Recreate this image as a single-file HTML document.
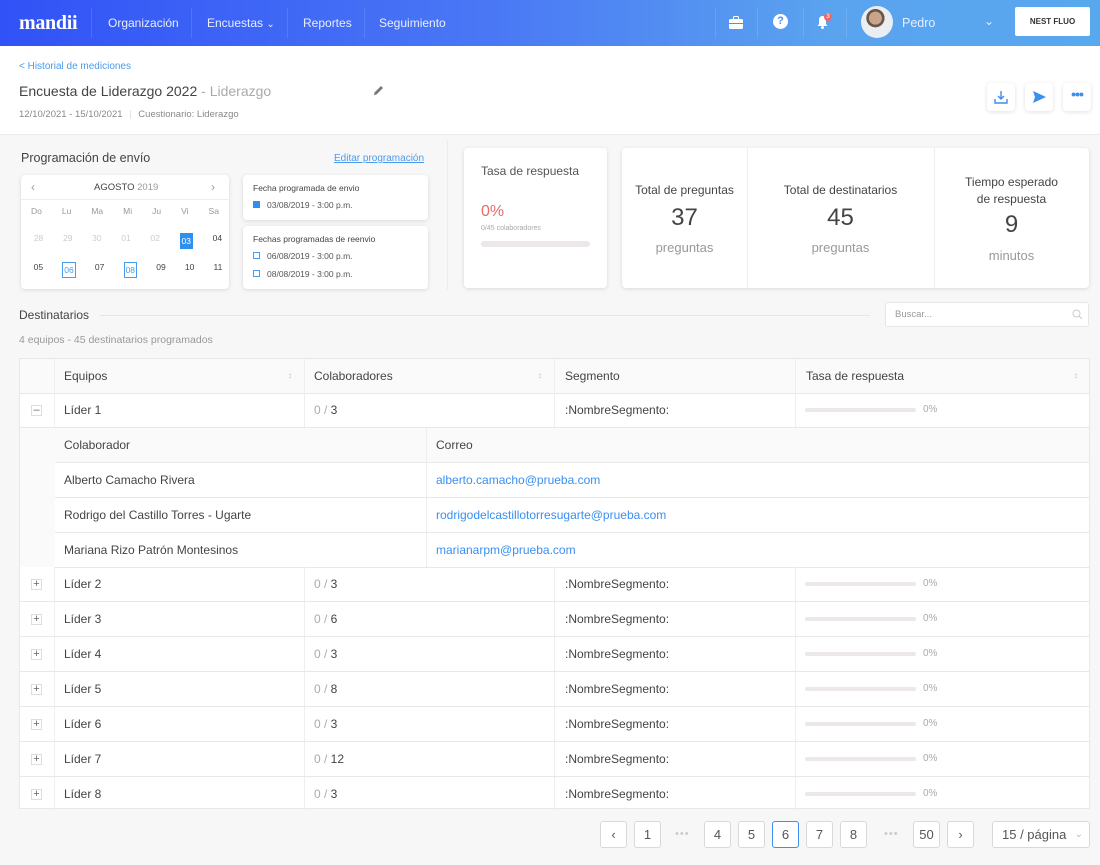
<!DOCTYPE html>
<html><head><meta charset="utf-8">
<style>
*{box-sizing:border-box;margin:0;padding:0}
body{width:1100px;height:865px;overflow:hidden;background:#f7f7f7;font-family:"Liberation Sans",sans-serif;color:#555;position:relative;font-size:12px}
.a{position:absolute}
.nav{left:0;top:0;width:1100px;height:46px;background:linear-gradient(90deg,#3152f6 0%,#4a78f5 45%,#5aa3ef 75%,#58a8ee 100%)}
.nav .t{color:#e8eeff;font-size:12px;top:16px}
.sep{width:1px;height:30px;top:8px;background:rgba(255,255,255,.12)}
.card{background:#fff;border-radius:4px;box-shadow:0 1px 4px rgba(0,0,0,.12)}
.tb{left:19px;width:1071px;background:#fff;border:1px solid #e8e8e8}
.row{position:absolute;left:0;width:1069px;height:35px;border-bottom:1px solid #e8e8e8}
.c{position:absolute;top:0;height:34px;line-height:34px;font-size:12px;color:#444}
.vl{position:absolute;top:0;width:1px;height:34px;background:#eee}
.pb{position:absolute;top:15px;left:10px;width:111px;height:4px;border-radius:2px;background:#ece8e8}
.pct{position:absolute;left:128px;top:0;font-size:10px;color:#aaa}
.bx{position:absolute;left:11px;top:12px;width:11px;height:11px;border:1px solid #ddd;font-size:11px;line-height:9px;text-align:center;color:#666;background:#fff}
.pg{position:absolute;top:821px;width:27px;height:27px;border:1px solid #d9d9d9;border-radius:3px;background:#fff;text-align:center;line-height:25px;font-size:13px;color:#555}
.dot{position:absolute;top:821px;color:#ccc;font-size:11px;line-height:27px;letter-spacing:1px}
</style></head><body>
<div class="a nav">
 <div class="a" style="left:19px;top:12px;color:#fff;font-family:'Liberation Serif',serif;font-weight:bold;font-size:20px;letter-spacing:-.3px">mandii</div>
 <div class="a sep" style="left:91px"></div>
 <div class="a t" style="left:108px">Organización</div>
 <div class="a sep" style="left:191px"></div>
 <div class="a t" style="left:207px">Encuestas <span style="font-size:10px">&#8964;</span></div>
 <div class="a sep" style="left:287px"></div>
 <div class="a t" style="left:303px">Reportes</div>
 <div class="a sep" style="left:364px"></div>
 <div class="a t" style="left:379px">Seguimiento</div>
 <div class="a sep" style="left:715px"></div>
 <svg class="a" style="left:729px;top:16px" width="14" height="13" viewBox="0 0 14 13"><rect x="0" y="3" width="14" height="10" rx="1.5" fill="#fff"/><rect x="4.5" y="0.5" width="5" height="3" rx="1" fill="none" stroke="#fff"/><rect x="0" y="7" width="14" height="1" fill="#5a8cf2"/></svg>
 <div class="a sep" style="left:757px"></div>
 <div class="a" style="left:773px;top:14px;width:15px;height:15px;border-radius:50%;background:#fff;color:#4f90f0;font-size:11px;font-weight:bold;text-align:center;line-height:15px">?</div>
 <div class="a sep" style="left:803px"></div>
 <svg class="a" style="left:816px;top:15px" width="13" height="15" viewBox="0 0 13 15"><path d="M6.5 1C4 1 3 3 3 5v4L1.5 11h10L10 9V5c0-2-1-4-3.5-4z" fill="#fff"/><circle cx="6.5" cy="12.5" r="1.5" fill="#fff"/></svg>
 <div class="a" style="left:824px;top:13px;width:8px;height:8px;border-radius:50%;background:#e86a6a;color:#fff;font-size:6px;text-align:center;line-height:8px">3</div>
 <div class="a sep" style="left:846px"></div>
 <div class="a" style="left:861px;top:6px;width:32px;height:32px;border-radius:50%;background:radial-gradient(circle at 45% 38%,#c9a48a 0 24%,#6b5648 25% 34%,#e9eef2 35%)"></div>
 <div class="a t" style="left:902px;top:16px;font-size:12.5px">Pedro</div>
 <div class="a" style="left:984px;top:14px;color:#e8eeff;font-size:12px">&#8964;</div>
 <div class="a" style="left:1015px;top:7px;width:75px;height:29px;background:#fff;border-radius:2px;text-align:center;line-height:29px;font-size:8px;font-weight:bold;color:#333">NEST FLUO</div>
</div>
<div class="a" style="left:0;top:46px;width:1100px;height:89px;background:#fff;border-bottom:1px solid #ececec"></div>
<div class="a" style="left:19px;top:61px;font-size:10px;color:#4a9bef">&lt; Historial de mediciones</div>
<div class="a" style="left:19px;top:83px;font-size:14px;color:#444">Encuesta de Liderazgo 2022 <span style="color:#aaa">- Liderazgo</span></div>
<svg class="a" style="left:373px;top:85px" width="11" height="11" viewBox="0 0 11 11"><path d="M1 10l.5-2.5L8 1l2 2-6.5 6.5z" fill="#777"/></svg>
<div class="a" style="left:19px;top:109px;font-size:9.5px;color:#888">12/10/2021 - 15/10/2021 <span style="color:#ddd;margin:0 4px">|</span> Cuestionario: Liderazgo</div>
<div class="a card" style="left:987px;top:83px;width:28px;height:28px"><svg style="margin:7px" width="14" height="14" viewBox="0 0 14 14"><path d="M7 1v8M4 6l3 3 3-3M1 9v4h12V9" fill="none" stroke="#3a8ff0" stroke-width="1.4"/></svg></div>
<div class="a card" style="left:1025px;top:83px;width:28px;height:28px"><svg style="margin:8px" width="13" height="12" viewBox="0 0 13 12"><path d="M0 0l13 6L0 12l2-6z" fill="#3a8ff0"/></svg></div>
<div class="a card" style="left:1063px;top:83px;width:28px;height:28px;color:#3a8ff0;font-size:14px;text-align:center;line-height:22px;font-weight:bold;letter-spacing:-1px">•••</div>

<div class="a" style="left:21px;top:151px;font-size:12.5px;color:#444">Programación de envío</div>
<div class="a" style="left:334px;top:153px;font-size:10px;color:#4a9bef;text-decoration:underline">Editar programación</div>
<div class="a card" style="left:21px;top:175px;width:208px;height:114px">
 <div class="a" style="left:0;top:0;width:208px;height:25px;border-bottom:1px solid #eee"></div>
 <div class="a" style="left:10px;top:5px;color:#999;font-size:12px">&#8249;</div>
 <div class="a" style="left:190px;top:5px;color:#999;font-size:12px">&#8250;</div>
 <div class="a" style="left:73px;top:7px;font-size:9.5px;color:#444">AGOSTO <span style="color:#999">2019</span></div>
 <div class="a" style="left:0;top:31px;width:208px;font-size:8.5px;color:#999;display:flex;justify-content:space-around"><span>Do</span><span>Lu</span><span>Ma</span><span>Mi</span><span>Ju</span><span>Vi</span><span>Sa</span></div>
 <div class="a" style="left:3px;top:58px;width:208px;font-size:8.5px;color:#ccc;display:flex;justify-content:space-around"><span>28</span><span>29</span><span>30</span><span>01</span><span>02</span><span style="background:#2e8ff0;color:#fff;padding:3px 2px">03</span><span style="color:#444">04</span></div>
 <div class="a" style="left:3px;top:87px;width:208px;font-size:8.5px;color:#444;display:flex;justify-content:space-around"><span>05</span><span style="border:1px solid #4a9bef;color:#4a9bef;padding:2px 1px">06</span><span>07</span><span style="border:1px solid #4a9bef;color:#4a9bef;padding:2px 1px">08</span><span>09</span><span>10</span><span>11</span></div>
</div>
<div class="a card" style="left:243px;top:175px;width:185px;height:45px">
 <div class="a" style="left:10px;top:8px;font-size:8.5px;color:#444">Fecha programada de envio</div>
 <div class="a" style="left:10px;top:26px;width:7px;height:7px;background:#2e8ff0"></div>
 <div class="a" style="left:24px;top:25px;font-size:8.5px;color:#555">03/08/2019 - 3:00 p.m.</div>
</div>
<div class="a card" style="left:243px;top:226px;width:185px;height:63px">
 <div class="a" style="left:10px;top:8px;font-size:8.5px;color:#444">Fechas programadas de reenvio</div>
 <div class="a" style="left:10px;top:26px;width:7px;height:7px;border:1px solid #4a9bef"></div>
 <div class="a" style="left:24px;top:25px;font-size:8.5px;color:#555">06/08/2019 - 3:00 p.m.</div>
 <div class="a" style="left:10px;top:44px;width:7px;height:7px;border:1px solid #4a9bef"></div>
 <div class="a" style="left:24px;top:43px;font-size:8.5px;color:#555">08/08/2019 - 3:00 p.m.</div>
</div>
<div class="a" style="left:447px;top:140px;width:1px;height:150px;background:#ececec"></div>
<div class="a card" style="left:464px;top:148px;width:143px;height:140px">
 <div class="a" style="left:17px;top:16px;font-size:12px;color:#555">Tasa de respuesta</div>
 <div class="a" style="left:17px;top:55px;font-size:16px;color:#e36b6b">0%</div>
 <div class="a" style="left:17px;top:77px;font-size:7px;color:#aaa">0/45 colaboradores</div>
 <div class="a" style="left:17px;top:93px;width:109px;height:6px;border-radius:3px;background:#ece8e8"></div>
</div>
<div class="a card" style="left:622px;top:148px;width:467px;height:140px">
 <div class="a" style="left:125px;top:0;width:1px;height:140px;background:#eee"></div>
 <div class="a" style="left:312px;top:0;width:1px;height:140px;background:#eee"></div>
 <div class="a" style="left:0;top:35px;width:125px;text-align:center;font-size:12px;color:#444">Total de preguntas</div>
 <div class="a" style="left:0;top:56px;width:125px;text-align:center;font-size:24px;color:#444">37</div>
 <div class="a" style="left:0;top:92px;width:125px;text-align:center;font-size:13px;color:#999">preguntas</div>
 <div class="a" style="left:125px;top:35px;width:187px;text-align:center;font-size:12px;color:#444">Total de destinatarios</div>
 <div class="a" style="left:125px;top:56px;width:187px;text-align:center;font-size:24px;color:#444">45</div>
 <div class="a" style="left:125px;top:92px;width:187px;text-align:center;font-size:13px;color:#999">preguntas</div>
 <div class="a" style="left:312px;top:26px;width:155px;text-align:center;font-size:12px;color:#444;line-height:17px">Tiempo esperado<br>de respuesta</div>
 <div class="a" style="left:312px;top:63px;width:155px;text-align:center;font-size:24px;color:#444">9</div>
 <div class="a" style="left:312px;top:100px;width:155px;text-align:center;font-size:13px;color:#999">minutos</div>
</div>

<div class="a" style="left:19px;top:308px;font-size:12px;color:#444">Destinatarios</div>
<div class="a" style="left:100px;top:315px;width:770px;height:1px;background:#e6e6e6"></div>
<div class="a" style="left:885px;top:302px;width:204px;height:25px;background:#fff;border:1px solid #e6e6e6;border-radius:3px">
 <div class="a" style="left:9px;top:6px;font-size:9.5px;color:#999">Buscar...</div>
 <svg class="a" style="left:186px;top:6px" width="11" height="11" viewBox="0 0 11 11"><circle cx="4.5" cy="4.5" r="3.5" fill="none" stroke="#ccc"/><path d="M7 7l3 3" stroke="#ccc"/></svg>
</div>
<div class="a" style="left:19px;top:334px;font-size:10.5px;color:#999">4 equipos - 45 destinatarios programados</div>

<div class="a tb" style="top:358px;height:451px">
 <div class="row" style="top:0;background:#fafafa">
  <div class="vl" style="left:34px"></div><div class="vl" style="left:284px"></div><div class="vl" style="left:534px"></div><div class="vl" style="left:775px"></div>
  <div class="c" style="left:44px">Equipos</div><div class="c" style="left:268px;color:#bbb;font-size:8px">&#8597;</div>
  <div class="c" style="left:294px">Colaboradores</div><div class="c" style="left:518px;color:#bbb;font-size:8px">&#8597;</div>
  <div class="c" style="left:545px">Segmento</div>
  <div class="c" style="left:786px">Tasa de respuesta</div><div class="c" style="left:1054px;color:#bbb;font-size:8px">&#8597;</div>
 </div>
 <div class="row" style="top:34px">
  <div class="vl" style="left:34px;background:#f0f0f0"></div><div class="vl" style="left:284px"></div><div class="vl" style="left:534px"></div><div class="vl" style="left:775px"></div>
  <div class="bx">–</div>
  <div class="c" style="left:44px">Líder 1</div>
  <div class="c" style="left:294px"><span style="color:#aaa">0 /</span> 3</div>
  <div class="c" style="left:545px">:NombreSegmento:</div>
  <div class="c" style="left:775px;width:200px"><div class="pb"></div><div class="pct">0%</div></div>
 </div>
 <div class="a" style="left:0;top:69px;width:35px;height:139px;background:#fafafa"></div>
 <div class="row" style="top:69px;left:35px;width:1034px;background:#fafafa">
  <div class="vl" style="left:371px"></div>
  <div class="c" style="left:9px">Colaborador</div><div class="c" style="left:381px">Correo</div>
 </div>
 <div class="row" style="top:104px;left:35px;width:1034px"><div class="vl" style="left:371px"></div><div class="c" style="left:9px">Alberto Camacho Rivera</div><div class="c" style="left:381px;color:#3a8ff0">alberto.camacho@prueba.com</div></div>
 <div class="row" style="top:139px;left:35px;width:1034px"><div class="vl" style="left:371px"></div><div class="c" style="left:9px">Rodrigo del Castillo Torres - Ugarte</div><div class="c" style="left:381px;color:#3a8ff0">rodrigodelcastillotorresugarte@prueba.com</div></div>
 <div class="row" style="top:174px;left:35px;width:1034px"><div class="vl" style="left:371px"></div><div class="c" style="left:9px">Mariana Rizo Patrón Montesinos</div><div class="c" style="left:381px;color:#3a8ff0">marianarpm@prueba.com</div></div>
</div>
<div id="rows"></div>
<script>
var d=[[2,3],[3,6],[4,3],[5,8],[6,3],[7,12],[8,3]],h='';
d.forEach(function(r,i){var t=358+209+i*35;
h+='<div class="a" style="left:20px;top:'+t+'px;width:1069px;height:35px;border-bottom:'+(i<6?'1px solid #e8e8e8':'none')+'">'
+'<div class="vl" style="left:34px;background:#f0f0f0"></div><div class="vl" style="left:284px"></div><div class="vl" style="left:534px"></div><div class="vl" style="left:775px"></div>'
+'<div class="bx">+</div><div class="c" style="left:44px">Líder '+r[0]+'</div>'
+'<div class="c" style="left:294px"><span style="color:#aaa">0 /</span> '+r[1]+'</div>'
+'<div class="c" style="left:545px">:NombreSegmento:</div>'
+'<div class="c" style="left:775px;width:200px"><div class="pb"></div><div class="pct">0%</div></div></div>';});
document.getElementById('rows').innerHTML=h;
</script>
<div class="pg" style="left:600px">&#8249;</div>
<div class="pg" style="left:634px">1</div>
<div class="dot" style="left:675px">•••</div>
<div class="pg" style="left:704px">4</div>
<div class="pg" style="left:738px">5</div>
<div class="pg" style="left:772px;border-color:#3a8ff0">6</div>
<div class="pg" style="left:806px">7</div>
<div class="pg" style="left:840px">8</div>
<div class="dot" style="left:884px">•••</div>
<div class="pg" style="left:913px">50</div>
<div class="pg" style="left:947px">&#8250;</div>
<div class="pg" style="left:992px;width:98px;text-align:left;padding-left:9px">15 / página <span style="position:absolute;right:6px;color:#bbb;font-size:10px">&#8964;</span></div>
</body></html>
